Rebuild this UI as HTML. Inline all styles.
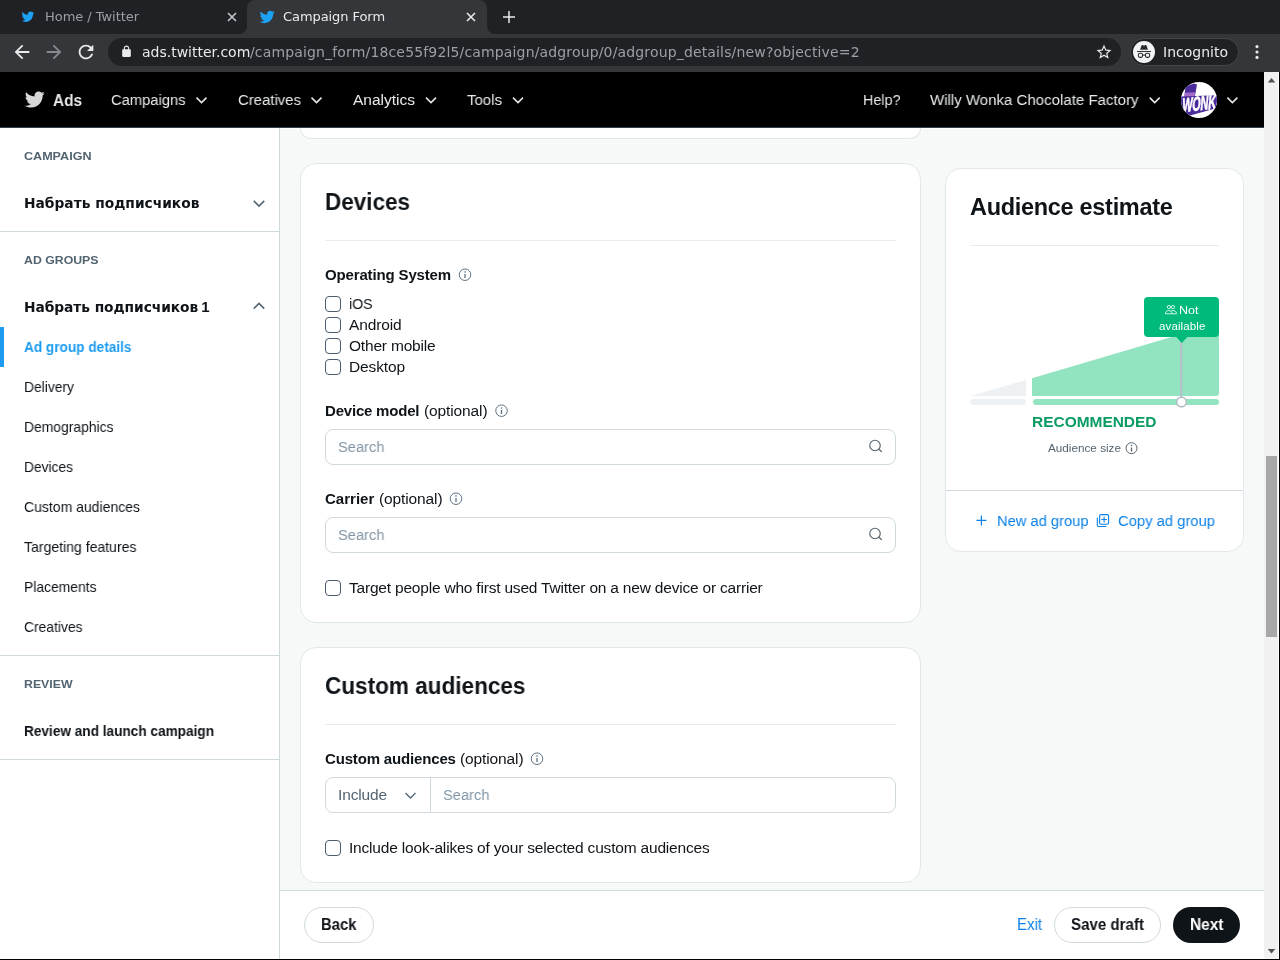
<!DOCTYPE html>
<html lang="en">
<head>
<meta charset="utf-8">
<title>Campaign Form</title>
<style>
*{box-sizing:border-box;margin:0;padding:0}
html,body{width:1280px;height:960px;overflow:hidden;background:#f7f9f9}
body{position:relative;font-family:"Liberation Sans","DejaVu Sans",sans-serif;color:#0f1419;font-size:15px}
.t{position:absolute;white-space:nowrap;transform-origin:0 50%;will-change:transform}
.ui{font-family:"DejaVu Sans","Liberation Sans",sans-serif}
.cy{font-family:"DejaVu Sans","Liberation Sans",sans-serif}
svg{position:absolute;overflow:visible}
.box{position:absolute}
.hr{position:absolute;height:1px}
.card{position:absolute;background:#fff;border:1px solid #e1e8ed;border-radius:16px}
.cb{position:absolute;width:16px;height:16px;border:1.5px solid #4b5d6e;border-radius:4px;background:#fff}
.inp{position:absolute;height:36px;border:1px solid #cfd9de;border-radius:8px;background:#fff}
.btn{position:absolute;height:36px;border-radius:18px}
</style>
</head>
<body>
<div class="box" style="left:0;top:0;width:1280px;height:34px;background:#202124"></div>
<div class="box" style="left:247px;top:0;width:240px;height:34px;background:#35363a;border-radius:8px 8px 0 0"></div>
<div class="box" style="left:239px;top:26px;width:8px;height:8px;background:radial-gradient(circle at 0 0,#202124 7.5px,#35363a 8.5px)"></div>
<div class="box" style="left:487px;top:26px;width:8px;height:8px;background:radial-gradient(circle at 100% 0,#202124 7.5px,#35363a 8.5px)"></div>
<div class="box" style="left:0;top:34px;width:1280px;height:38px;background:#35363a"></div>
<div class="box" style="left:108px;top:38px;width:1013px;height:28px;border-radius:14px;background:#202124"></div>
<div class="box" style="left:1130px;top:38px;width:109px;height:28px;border-radius:14px;background:#202124;border:1px solid #45464a"></div>
<svg style="left:21px;top:10px" width="13.500" height="13.500" viewBox="0 0 24 24"><path fill="#1da1f2" d="M23.643 4.937c-.835.37-1.732.62-2.675.733.962-.576 1.7-1.49 2.048-2.578-.9.534-1.897.922-2.958 1.13-.85-.904-2.06-1.47-3.4-1.47-2.572 0-4.658 2.086-4.658 4.66 0 .364.042.718.12 1.06-3.873-.195-7.304-2.05-9.602-4.868-.4.69-.63 1.49-.63 2.342 0 1.616.823 3.043 2.072 3.878-.764-.025-1.482-.234-2.11-.583v.06c0 2.257 1.605 4.14 3.737 4.568-.392.106-.803.162-1.227.162-.3 0-.593-.028-.877-.082.593 1.85 2.313 3.198 4.352 3.234-1.595 1.25-3.604 1.995-5.786 1.995-.376 0-.747-.022-1.112-.065 2.062 1.323 4.51 2.093 7.14 2.093 8.57 0 13.255-7.098 13.255-13.254 0-.2-.005-.402-.014-.602.91-.658 1.7-1.477 2.323-2.41z"/></svg>
<div class="t ui" style="left:45px;top:6.5px;font-size:13px;line-height:20px;color:#9aa0a6;letter-spacing:-0.044px;">Home / Twitter</div>
<svg style="left:224px;top:9px" width="16" height="16" viewBox="0 0 24 24"><path stroke="#c4c7cb" stroke-width="2.400" fill="none" d="M6 6L18 18M18 6L6 18"/></svg>
<svg style="left:258.750px;top:8.750px" width="16" height="16" viewBox="0 0 24 24"><path fill="#1da1f2" d="M23.643 4.937c-.835.37-1.732.62-2.675.733.962-.576 1.7-1.49 2.048-2.578-.9.534-1.897.922-2.958 1.13-.85-.904-2.06-1.47-3.4-1.47-2.572 0-4.658 2.086-4.658 4.66 0 .364.042.718.12 1.06-3.873-.195-7.304-2.05-9.602-4.868-.4.69-.63 1.49-.63 2.342 0 1.616.823 3.043 2.072 3.878-.764-.025-1.482-.234-2.11-.583v.06c0 2.257 1.605 4.14 3.737 4.568-.392.106-.803.162-1.227.162-.3 0-.593-.028-.877-.082.593 1.85 2.313 3.198 4.352 3.234-1.595 1.25-3.604 1.995-5.786 1.995-.376 0-.747-.022-1.112-.065 2.062 1.323 4.51 2.093 7.14 2.093 8.57 0 13.255-7.098 13.255-13.254 0-.2-.005-.402-.014-.602.91-.658 1.7-1.477 2.323-2.41z"/></svg>
<div class="t ui" style="left:283px;top:6.5px;font-size:13px;line-height:20px;color:#e8eaed;letter-spacing:-0.071px;">Campaign Form</div>
<svg style="left:463px;top:9px" width="16" height="16" viewBox="0 0 24 24"><path stroke="#e8eaed" stroke-width="2.400" fill="none" d="M6 6L18 18M18 6L6 18"/></svg>
<svg style="left:500px;top:8px" width="18" height="18" viewBox="0 0 24 24"><path fill="#e8eaed" d="M20 13h-7v7h-2v-7H4v-2h7V4h2v7h7v2z"/></svg>
<svg style="left:11px;top:41px" width="22" height="22" viewBox="0 0 24 24"><path fill="#e8eaed" d="M20 11H7.83l5.59-5.59L12 4l-8 8 8 8 1.41-1.41L7.83 13H20v-2z"/></svg>
<svg style="left:43px;top:41px" width="22" height="22" viewBox="0 0 24 24"><path fill="#85888c" d="M12 4l-1.41 1.41L16.17 11H4v2h12.17l-5.58 5.590L12 20l8-8z"/></svg>
<svg style="left:75px;top:41px" width="22" height="22" viewBox="0 0 24 24"><path fill="#e8eaed" d="M17.65 6.35C16.2 4.9 14.21 4 12 4c-4.42 0-7.990 3.580-7.990 8s3.570 8 7.990 8c3.730 0 6.840-2.550 7.730-6h-2.080c-.820 2.330-3.040 4-5.650 4-3.310 0-6-2.690-6-6s2.690-6 6-6c1.660 0 3.140.690 4.220 1.780L13 11h7V4l-2.350 2.350z"/></svg>
<svg style="left:119.750px;top:45px" width="13" height="13" viewBox="0 0 24 24"><path fill="#e8eaed" d="M18 8h-1V6c0-2.760-2.240-5-5-5S7 3.240 7 6v2H6c-1.100 0-2 .9-2 2v10c0 1.100.9 2 2 2h12c1.100 0 2-.9 2-2V10c0-1.100-.9-2-2-2zM9 6c0-1.660 1.340-3 3-3s3 1.340 3 3v2H9V6z"/></svg>
<div class="t ui" style="left:142px;top:42px;font-size:14px;line-height:20px;color:#e8eaed;letter-spacing:-0.010px;">ads.twitter.com</div>
<div class="t ui" style="left:250.3px;top:42px;font-size:14px;line-height:20px;color:#9aa0a6;letter-spacing:0.153px;">/campaign_form/18ce55f92l5/campaign/adgroup/0/adgroup_details/new?objective=2</div>
<svg style="left:1095px;top:43px" width="18" height="18" viewBox="0 0 24 24"><path fill="#e8eaed" d="M22 9.240l-7.190-.620L12 2 9.190 8.630 2 9.240l5.460 4.730L5.820 21 12 17.270 18.180 21l-1.630-7.030L22 9.240zM12 15.400l-3.760 2.270 1-4.280-3.320-2.880 4.380-.380L12 6.100l1.710 4.040 4.380.380-3.320 2.880 1 4.280L12 15.400z"/></svg>
<div class="box" style="left:1133px;top:41px;width:22px;height:22px;border-radius:11px;background:#f1f3f4"></div>
<svg style="left:0;top:0" width="1" height="1"><path d="M1140.100 49.800L1141.400 45.700Q1141.700 44.800 1142.600 45.100L1144 45.700L1145.400 45.100Q1146.300 44.800 1146.600 45.700L1147.900 49.800z" fill="#2a2b2e"/><rect x="1137" y="51" width="14" height=".95" fill="#2a2b2e"/><g fill="none" stroke="#2a2b2e" stroke-width="1.050"><rect x="1138.400" y="53.300" width="4.100" height="4.100" rx="1.300"/><rect x="1145.500" y="53.300" width="4.100" height="4.100" rx="1.300"/><path d="M1142.500 55.100h3"/></g></svg>
<div class="t ui" style="left:1163px;top:42px;font-size:14px;line-height:20px;color:#e8eaed;">Incognito</div>
<svg style="left:1247px;top:42px" width="20" height="20" viewBox="0 0 24 24"><g fill="#e8eaed"><circle cx="12" cy="5.5" r="1.9"/><circle cx="12" cy="12" r="1.9"/><circle cx="12" cy="18.5" r="1.9"/></g></svg>
<div class="box" style="left:0;top:72px;width:1264px;height:888px;background:#f7f9f9"></div>
<div class="box" style="left:280px;top:128px;width:984px;height:1px;background:#fff"></div>
<div class="box" style="left:0;top:72px;width:1264px;height:56px;background:#000;border-bottom:1px solid #38444d"></div>
<svg style="left:24px;top:88.900px" width="21" height="21" viewBox="0 0 24 24"><path fill="#d9d9d9" d="M23.643 4.937c-.835.37-1.732.62-2.675.733.962-.576 1.7-1.49 2.048-2.578-.9.534-1.897.922-2.958 1.13-.85-.904-2.06-1.47-3.4-1.47-2.572 0-4.658 2.086-4.658 4.66 0 .364.042.718.12 1.06-3.873-.195-7.304-2.05-9.602-4.868-.4.69-.63 1.49-.63 2.342 0 1.616.823 3.043 2.072 3.878-.764-.025-1.482-.234-2.11-.583v.06c0 2.257 1.605 4.14 3.737 4.568-.392.106-.803.162-1.227.162-.3 0-.593-.028-.877-.082.593 1.85 2.313 3.198 4.352 3.234-1.595 1.25-3.604 1.995-5.786 1.995-.376 0-.747-.022-1.112-.065 2.062 1.323 4.51 2.093 7.14 2.093 8.57 0 13.255-7.098 13.255-13.254 0-.2-.005-.402-.014-.602.91-.658 1.7-1.477 2.323-2.41z"/></svg>
<div class="t" style="left:53px;top:90px;font-size:16.5px;line-height:20px;color:#e7e9ea;font-weight:bold;transform:scaleX(0.9303);">Ads</div>
<div class="t" style="left:111px;top:90px;font-size:15.5px;line-height:20px;color:#e7e9ea;transform:scaleX(0.9502);">Campaigns</div>
<svg style="left:0;top:0" width="1" height="1"><path d="M196.5 97.6L201.5 102.6L206.5 97.6" fill="none" stroke="#e7e9ea" stroke-width="1.5"/></svg>
<div class="t" style="left:238px;top:90px;font-size:15.5px;line-height:20px;color:#e7e9ea;transform:scaleX(0.9623);">Creatives</div>
<svg style="left:0;top:0" width="1" height="1"><path d="M311.5 97.6L316.5 102.6L321.5 97.6" fill="none" stroke="#e7e9ea" stroke-width="1.5"/></svg>
<div class="t" style="left:353px;top:90px;font-size:15.5px;line-height:20px;color:#e7e9ea;">Analytics</div>
<svg style="left:0;top:0" width="1" height="1"><path d="M426 97.6L431 102.6L436 97.6" fill="none" stroke="#e7e9ea" stroke-width="1.5"/></svg>
<div class="t" style="left:467px;top:90px;font-size:15.5px;line-height:20px;color:#e7e9ea;transform:scaleX(0.9672);">Tools</div>
<svg style="left:0;top:0" width="1" height="1"><path d="M513 97.6L518 102.6L523 97.6" fill="none" stroke="#e7e9ea" stroke-width="1.5"/></svg>
<div class="t" style="left:863px;top:90px;font-size:15.5px;line-height:20px;color:#e7e9ea;transform:scaleX(0.9259);">Help?</div>
<div class="t" style="left:930px;top:90px;font-size:15.5px;line-height:20px;color:#e7e9ea;transform:scaleX(0.9695);">Willy Wonka Chocolate Factory</div>
<svg style="left:0;top:0" width="1" height="1"><path d="M1149.7 97.6L1154.7 102.6L1159.7 97.6" fill="none" stroke="#e7e9ea" stroke-width="1.5"/></svg>
<svg style="left:1181px;top:82px;overflow:hidden;border-radius:18px;will-change:transform" width="36" height="36" viewBox="0 0 36 36"><rect width="36" height="36" fill="#fff"/><path d="M3.300 15L4.500 4.500L13 1.500L16 2.500L13.800 15z" fill="#4b2a9b"/><path d="M3.500 14.800L4 10.700L14.300 10.300L13.700 15z" fill="#a56cc8"/><path d="M0 14.600L36 13.300V26L9 33.500L0 29z" fill="#4b2a9b"/><text transform="matrix(.84 -.10 -.14 1.55 .800 30.500)" font-family="Liberation Sans, sans-serif" font-weight="bold" font-size="13" fill="#fff" stroke="#fff" stroke-width=".4" letter-spacing="-.3">WONKA</text></svg>
<svg style="left:0;top:0" width="1" height="1"><path d="M1227.4 97.6L1232.4 102.6L1237.4 97.6" fill="none" stroke="#e7e9ea" stroke-width="1.5"/></svg>
<div class="box" style="left:0;top:128px;width:280px;height:832px;background:#fff;border-right:1px solid #cfd9de"></div>
<div class="t" style="left:24px;top:145.5px;font-size:11.5px;line-height:20px;color:#536471;font-weight:bold;transform:scaleX(1.0928);">CAMPAIGN</div>
<div class="t cy" style="left:24px;top:192.5px;font-size:13.8px;line-height:20px;color:#0f1419;font-weight:bold;">Набрать подписчиков</div>
<svg style="left:0;top:0" width="1" height="1"><path d="M253.75 200.875L259 206.125L264.25 200.875" fill="none" stroke="#536471" stroke-width="1.5"/></svg>
<div class="hr" style="left:0px;top:231px;width:279px;background:#cfd9de"></div>
<div class="t" style="left:24px;top:249.5px;font-size:11.5px;line-height:20px;color:#536471;font-weight:bold;transform:scaleX(1.0695);">AD GROUPS</div>
<div class="t cy" style="left:24px;top:296.5px;font-size:13.8px;line-height:20px;color:#0f1419;font-weight:bold;letter-spacing:-0.070px;">Набрать подписчиков<span style="font-family:Liberation Sans,sans-serif;font-size:15px;word-spacing:-1px"> 1</span></div>
<svg style="left:0;top:0" width="1" height="1"><path d="M253.75 308.625L259 303.375L264.25 308.625" fill="none" stroke="#536471" stroke-width="1.5"/></svg>
<div class="box" style="left:0;top:327px;width:4px;height:40px;background:#1d9bf0"></div>
<div class="t" style="left:24px;top:337px;font-size:14.5px;line-height:20px;color:#1d9bf0;font-weight:bold;transform:scaleX(0.9396);">Ad group details</div>
<div class="t" style="left:24px;top:377px;font-size:14.5px;line-height:20px;color:#0f1419;transform:scaleX(0.9547);">Delivery</div>
<div class="t" style="left:24px;top:417px;font-size:14.5px;line-height:20px;color:#0f1419;transform:scaleX(0.9572);">Demographics</div>
<div class="t" style="left:24px;top:457px;font-size:14.5px;line-height:20px;color:#0f1419;transform:scaleX(0.9500);">Devices</div>
<div class="t" style="left:24px;top:497px;font-size:14.5px;line-height:20px;color:#0f1419;transform:scaleX(0.9659);">Custom audiences</div>
<div class="t" style="left:24px;top:537px;font-size:14.5px;line-height:20px;color:#0f1419;transform:scaleX(0.9692);">Targeting features</div>
<div class="t" style="left:24px;top:577px;font-size:14.5px;line-height:20px;color:#0f1419;transform:scaleX(0.9569);">Placements</div>
<div class="t" style="left:24px;top:617px;font-size:14.5px;line-height:20px;color:#0f1419;transform:scaleX(0.9551);">Creatives</div>
<div class="hr" style="left:0px;top:655px;width:279px;background:#cfd9de"></div>
<div class="t" style="left:24px;top:673.5px;font-size:11.5px;line-height:20px;color:#536471;font-weight:bold;transform:scaleX(1.0689);">REVIEW</div>
<div class="t" style="left:24px;top:721px;font-size:14.5px;line-height:20px;color:#0f1419;font-weight:bold;transform:scaleX(0.9394);">Review and launch campaign</div>
<div class="hr" style="left:0px;top:759px;width:279px;background:#cfd9de"></div>
<div class="card" style="left:300px;top:128px;width:621px;height:11px;border-radius:0 0 16px 16px;border-top:none"></div>
<div class="card" style="left:300px;top:163px;width:621px;height:460px"></div>
<div class="t" style="left:325px;top:188px;font-size:23.5px;line-height:28px;color:#0f1419;font-weight:bold;transform:scaleX(0.9566);">Devices</div>
<div class="hr" style="left:325px;top:240px;width:571px;background:#e6ecf0"></div>
<div class="t" style="left:325px;top:265px;font-size:15px;line-height:20px;color:#0f1419;font-weight:bold;letter-spacing:-0.148px;">Operating System</div>
<svg style="left:0;top:0" width="1" height="1"><circle cx="465" cy="274.7" r="5.75" fill="none" stroke="#5b7083" stroke-width="1"/><path d="M465 274V278" stroke="#5b7083" stroke-width="1.3"/><circle cx="465" cy="272" r=".8" fill="#5b7083"/></svg>
<div class="cb" style="left:325px;top:296px"></div>
<div class="t" style="left:349px;top:294px;font-size:15.5px;line-height:20px;transform:scaleX(0.9093);">iOS</div>
<div class="cb" style="left:325px;top:317px"></div>
<div class="t" style="left:349px;top:315px;font-size:15.5px;line-height:20px;letter-spacing:-0.134px;">Android</div>
<div class="cb" style="left:325px;top:338px"></div>
<div class="t" style="left:349px;top:336px;font-size:15.5px;line-height:20px;letter-spacing:-0.186px;">Other mobile</div>
<div class="cb" style="left:325px;top:359px"></div>
<div class="t" style="left:349px;top:357px;font-size:15.5px;line-height:20px;letter-spacing:-0.125px;">Desktop</div>
<div class="t" style="left:325px;top:401px;font-size:15px;line-height:20px;font-weight:bold;letter-spacing:-0.202px;">Device model</div>
<div class="t" style="left:424px;top:401px;font-size:15.5px;line-height:20px;letter-spacing:-0.113px;">(optional)</div>
<svg style="left:0;top:0" width="1" height="1"><circle cx="501.5" cy="410.7" r="5.75" fill="none" stroke="#5b7083" stroke-width="1"/><path d="M501.5 410V414" stroke="#5b7083" stroke-width="1.3"/><circle cx="501.5" cy="408" r=".8" fill="#5b7083"/></svg>
<div class="inp" style="left:325px;top:429px;width:571px"></div>
<div class="t" style="left:338px;top:437px;font-size:15.5px;line-height:20px;color:#8195a6;transform:scaleX(0.9466);">Search</div>
<svg style="left:0;top:0" width="1" height="1"><circle cx="875" cy="445.5" r="5.250" fill="none" stroke="#536471" stroke-width="1.150"/><path d="M878.8 449.2L881.8 451.8" stroke="#536471" stroke-width="1.300"/></svg>
<div class="t" style="left:325px;top:489px;font-size:15px;line-height:20px;font-weight:bold;letter-spacing:0.014px;">Carrier</div>
<div class="t" style="left:378.5px;top:489px;font-size:15.5px;line-height:20px;letter-spacing:-0.113px;">(optional)</div>
<svg style="left:0;top:0" width="1" height="1"><circle cx="456" cy="498.7" r="5.75" fill="none" stroke="#5b7083" stroke-width="1"/><path d="M456 498V502" stroke="#5b7083" stroke-width="1.3"/><circle cx="456" cy="496" r=".8" fill="#5b7083"/></svg>
<div class="inp" style="left:325px;top:517px;width:571px"></div>
<div class="t" style="left:338px;top:525px;font-size:15.5px;line-height:20px;color:#8195a6;transform:scaleX(0.9466);">Search</div>
<svg style="left:0;top:0" width="1" height="1"><circle cx="875" cy="533.5" r="5.250" fill="none" stroke="#536471" stroke-width="1.150"/><path d="M878.8 537.2L881.8 539.8" stroke="#536471" stroke-width="1.300"/></svg>
<div class="cb" style="left:325px;top:580px"></div>
<div class="t" style="left:349px;top:578px;font-size:15.5px;line-height:20px;letter-spacing:-0.201px;">Target people who first used Twitter on a new device or carrier</div>
<div class="card" style="left:300px;top:647px;width:621px;height:236px"></div>
<div class="t" style="left:325px;top:672px;font-size:23.5px;line-height:28px;color:#0f1419;font-weight:bold;transform:scaleX(0.9595);">Custom audiences</div>
<div class="hr" style="left:325px;top:724px;width:571px;background:#e6ecf0"></div>
<div class="t" style="left:325px;top:749px;font-size:15px;line-height:20px;font-weight:bold;letter-spacing:-0.161px;">Custom audiences</div>
<div class="t" style="left:460px;top:749px;font-size:15.5px;line-height:20px;letter-spacing:-0.113px;">(optional)</div>
<svg style="left:0;top:0" width="1" height="1"><circle cx="537" cy="758.7" r="5.75" fill="none" stroke="#5b7083" stroke-width="1"/><path d="M537 758V762" stroke="#5b7083" stroke-width="1.3"/><circle cx="537" cy="756" r=".8" fill="#5b7083"/></svg>
<div class="inp" style="left:325px;top:777px;width:571px"></div>
<div class="box" style="left:430px;top:778px;width:1px;height:34px;background:#cfd9de"></div>
<div class="t" style="left:338px;top:785px;font-size:15.5px;line-height:20px;color:#536471;letter-spacing:-0.141px;">Include</div>
<svg style="left:0;top:0" width="1" height="1"><path d="M405.5 793L410.5 798L415.5 793" fill="none" stroke="#536471" stroke-width="1.3"/></svg>
<div class="t" style="left:443px;top:785px;font-size:15.5px;line-height:20px;color:#8195a6;transform:scaleX(0.9466);">Search</div>
<div class="cb" style="left:325px;top:840px"></div>
<div class="t" style="left:349px;top:838px;font-size:15.5px;line-height:20px;letter-spacing:-0.188px;">Include look-alikes of your selected custom audiences</div>
<div class="card" style="left:945px;top:168px;width:299px;height:384px"></div>
<div class="t" style="left:970px;top:193px;font-size:23.5px;line-height:28px;color:#0f1419;font-weight:bold;letter-spacing:-0.303px;">Audience estimate</div>
<div class="hr" style="left:970px;top:245px;width:249px;background:#e6ecf0"></div>
<svg style="left:0;top:0" width="1" height="1"><path d="M970.500 396L1026 379.900V396z" fill="#eef1f3"/><path d="M1032 378.200L1219 322.900V393a3 3 0 0 1-3 3H1032z" fill="#92e3bf"/><rect x="970" y="399" width="56" height="6" rx="3" fill="#eef1f3"/><rect x="1033" y="399" width="186" height="6" rx="3" fill="#92e3bf"/><path d="M1181.200 340V399" stroke="#b8bccd" stroke-width="2"/><rect x="1144" y="297" width="75" height="40" rx="4" fill="#00ba7c"/><path d="M1175.800 336.500h12l-6 6.500z" fill="#00ba7c"/><circle cx="1181.500" cy="402" r="4.800" fill="#fff" stroke="#b0bac3" stroke-width="1.500"/><g fill="none" stroke="#fff" stroke-width=".850"><circle cx="1168.900" cy="307.100" r="1.650"/><circle cx="1172.900" cy="307.100" r="1.650"/><path d="M1165.400 313.800c0-2 1.300-3.300 3.300-3.300s3.300 1.300 3.300 3.300zM1171.300 310.800c.5-.2 1-.3 1.600-.3 2.200 0 3.500 1.300 3.500 3.300h-4.400"/></g></svg>
<div class="t" style="left:1179px;top:302px;font-size:11.5px;line-height:16px;color:#fff;transform:scaleX(1.0890);">Not</div>
<div class="t" style="left:1158.5px;top:318px;font-size:11.5px;line-height:16px;color:#fff;letter-spacing:0.122px;">available</div>
<div class="t" style="left:1032px;top:412px;font-size:15px;line-height:20px;color:#089c62;font-weight:bold;transform:scaleX(1.0303);">RECOMMENDED</div>
<div class="t" style="left:1048px;top:440px;font-size:11px;line-height:16px;color:#536471;transform:scaleX(1.0657);">Audience size</div>
<svg style="left:0;top:0" width="1" height="1"><circle cx="1131.5" cy="448.2" r="5.5" fill="none" stroke="#536471" stroke-width="1"/><path d="M1131.5 447.5V451.5" stroke="#536471" stroke-width="1.3"/><circle cx="1131.5" cy="445.5" r=".8" fill="#536471"/></svg>
<div class="hr" style="left:946px;top:490px;width:297px;background:#cfd9de"></div>
<svg style="left:0;top:0" width="1" height="1"><path d="M976.400 520.400h10M981.400 515.400v10" stroke="#0b80e6" stroke-width="1.250"/><g fill="none" stroke="#0b80e6" stroke-width="1.100"><rect x="1099.600" y="514.600" width="9" height="9.700" rx="1.600"/><path d="M1097.300 518v7a1.500 1.500 0 0 0 1.500 1.500h7.200M1104.100 517.100v4.800M1101.700 519.500h4.800" stroke-linecap="round"/></g></svg>
<div class="t" style="left:997px;top:511px;font-size:15.5px;line-height:20px;color:#0b80e6;transform:scaleX(0.9480);">New ad group</div>
<div class="t" style="left:1117.8px;top:511px;font-size:15.5px;line-height:20px;color:#0b80e6;transform:scaleX(0.9539);">Copy ad group</div>
<div class="box" style="left:280px;top:890px;width:984px;height:70px;background:#fff;border-top:1px solid #cfd9de"></div>
<div class="btn" style="left:304px;top:907px;width:70px;border:1px solid #cfd9de;background:#fff"></div>
<div class="t" style="left:321px;top:915px;font-size:16px;line-height:20px;color:#0f1419;font-weight:bold;transform:scaleX(0.9281);">Back</div>
<div class="t" style="left:1016.5px;top:915px;font-size:16px;line-height:20px;color:#0b80e6;transform:scaleX(0.9373);">Exit</div>
<div class="btn" style="left:1054px;top:907px;width:107px;border:1px solid #cfd9de;background:#fff"></div>
<div class="t" style="left:1070.5px;top:915px;font-size:16px;line-height:20px;color:#0f1419;font-weight:bold;transform:scaleX(0.9435);">Save draft</div>
<div class="btn" style="left:1173px;top:907px;width:67px;background:#0f1419"></div>
<div class="t" style="left:1189.5px;top:915px;font-size:16px;line-height:20px;color:#fff;font-weight:bold;transform:scaleX(0.9658);">Next</div>
<div class="box" style="left:1264px;top:72px;width:14px;height:886px;background:#f1f1f1"></div>
<div class="box" style="left:1278px;top:72px;width:1px;height:887px;background:#fff"></div>
<div class="box" style="left:1266px;top:456px;width:11px;height:181px;background:#a8a8a8"></div>
<svg style="left:0;top:0" width="1" height="1"><path d="M1267.750 82.500h7.500l-3.750-4.500z" fill="#505050"/><path d="M1267.750 949h7.500l-3.750 4.500z" fill="#505050"/></svg>
<div class="box" style="left:1279px;top:72px;width:1px;height:888px;background:#000"></div>
<div class="box" style="left:0;top:959px;width:1280px;height:1px;background:#000"></div>
</body>
</html>
